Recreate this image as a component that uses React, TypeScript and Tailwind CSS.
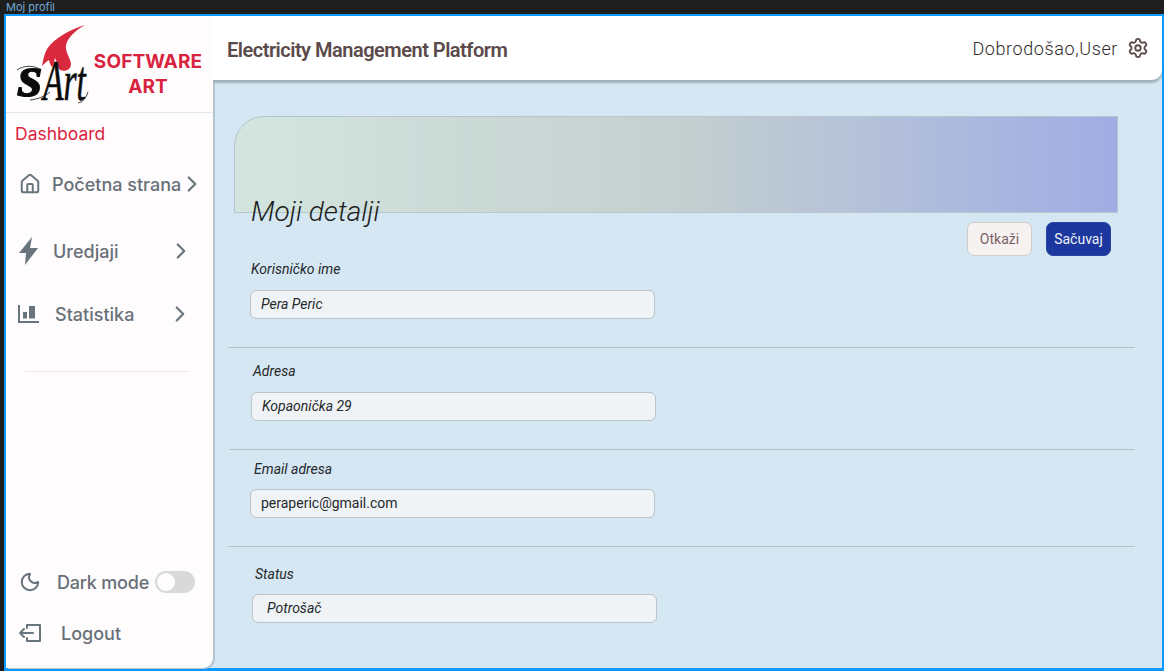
import React from "react";
import { ChevronRight, House, Moon, Settings } from "lucide-react";

const barlow = { fontFamily: "Roboto, 'Noto Sans', sans-serif" };

function Logo() {
  return (
    <div className="relative h-[97px] border-b border-[#e4e6ea] flex items-start">
      <svg width="74" height="94" viewBox="0 -6 74 94" className="ml-[10px] mt-[2px] shrink-0">
        <path d="M69 1 C55 5 38 14 31 25 C28 31 27 36 26 42 C29 39 31 37 33 36 C34 40 35 42 36 43 C38 41 38 38 39 34 C41 37 41 43 44 46 C49 48 55 46 55 40 C54 33 49 28 50 21 C52 13 60 6 69 1 Z" fill="#d8293f" />
        <text transform="translate(2 72) scale(1.05 1)" fill="#0b0b0b" stroke="#0b0b0b" strokeWidth="1.2" style={{ fontFamily: "'Liberation Serif', serif", fontStyle: "italic", fontWeight: 700, fontSize: 60 }}>s</text>
        <text transform="translate(27 76) scale(0.6 1)" fill="#0b0b0b" stroke="#0b0b0b" strokeWidth="0.6" style={{ fontFamily: "'Liberation Serif', serif", fontStyle: "italic", fontSize: 56 }}>Art</text>
        <path d="M1 46 C8 41 18 41 25 46 M14 76 C22 75 28 73 34 68 M62 79 C67 78 70 74 72 68" stroke="#111" strokeWidth="0.8" fill="none" />
      </svg>
      <div className="-ml-[1px] mt-[33px] w-[118px] text-center text-[#d8233f] text-[19px] leading-[25px] font-bold tracking-[0.1px]" style={{ fontFamily: "Inter, sans-serif" }}>
        <div>SOFTWARE</div>
        <div>ART</div>
      </div>
    </div>
  );
}

function Bolt() {
  return (
    <svg width="20" height="28" viewBox="0 0 20 28" className="text-[#69757d]">
      <path d="M13 0 L0 16 H7 L6 28 L19 11 H11 Z" fill="currentColor" />
    </svg>
  );
}

function Bars() {
  return (
    <svg width="21" height="18" viewBox="0 0 21 18" className="text-[#69757d]">
      <path d="M1 0 V17 H21" stroke="currentColor" strokeWidth="2" fill="none" />
      <rect x="5" y="7" width="4" height="6.5" fill="currentColor" />
      <rect x="11" y="1" width="6" height="12.5" fill="currentColor" />
    </svg>
  );
}

function LogoutIcon() {
  return (
    <svg width="24" height="20" viewBox="0 0 24 20" fill="none" stroke="#69757d" strokeWidth="2" strokeLinecap="round" strokeLinejoin="round">
      <path d="M9 5 V2 H22 V18 H9 V15" />
      <path d="M2 10 H15 M6 6 L2 10 L6 14" />
    </svg>
  );
}

function Sidebar() {
  const text = "text-[18px] font-medium text-[#687078]";
  return (
    <aside className="w-[207px] shrink-0 h-full bg-[#fffcfd] rounded-br-[10px] shadow-[2px_1px_0_#b3c4cd] flex flex-col" style={{ fontFamily: "Inter, sans-serif" }}>
      <Logo />
      <div className="pl-[9px] mt-[10px] text-[17.5px] leading-[22px] text-[#dc2340]">Dashboard</div>
      <div className="mt-[27px] h-[24px] flex items-center">
        <House size={22} strokeWidth={2.2} className="ml-[13px] text-[#69757d]" />
        <span className={`ml-[11px] ${text}`}>Početna strana</span>
        <ChevronRight size={26} strokeWidth={2} className="text-[#69757d] -ml-[2px]" />
      </div>
      <div className="mt-[41px] h-[28px] flex items-center">
        <div className="ml-[13px] w-[20px]"><Bolt /></div>
        <span className={`ml-[14px] ${text}`}>Uredjaji</span>
        <ChevronRight size={26} strokeWidth={2} className="text-[#69757d] ml-[50px]" />
      </div>
      <div className="mt-[37px] h-[24px] flex items-center">
        <div className="ml-[12px] w-[21px]"><Bars /></div>
        <span className={`ml-[16px] ${text}`}>Statistika</span>
        <ChevronRight size={26} strokeWidth={2} className="text-[#69757d] ml-[33px]" />
      </div>
      <div className="mt-[45px] ml-[19px] w-[164px] border-t border-[#eceaec]" />
      <div className="mt-auto h-[24px] flex items-center">
        <Moon size={22} strokeWidth={2.2} className="ml-[13px] text-[#69757d]" />
        <span className={`ml-[16px] tracking-[-0.2px] ${text}`}>Dark mode</span>
        <div className="ml-[6px] w-[40px] h-[22px] rounded-full bg-[#d9d9d9] p-[2px]">
          <div className="w-[18px] h-[18px] rounded-full bg-[#fffcfd]" />
        </div>
      </div>
      <div className="mt-[27px] mb-[23px] h-[24px] flex items-center">
        <div className="ml-[12px]"><LogoutIcon /></div>
        <span className={`ml-[19px] ${text}`}>Logout</span>
      </div>
    </aside>
  );
}

function Header() {
  return (
    <header className="h-[64px] shrink-0 bg-white rounded-br-[10px] shadow-[0_3px_2px_#9fb2ba] flex items-center" style={barlow}>
      <div className="ml-[14px] mt-[3px] text-[20px] font-semibold text-[#5b4a4a] tracking-[-0.5px]">Electricity Management Platform</div>
      <div className="ml-auto mr-[13px] flex items-center gap-[9px]">
        <span className="text-[18px] font-light text-[#2f2b2b] tracking-[0.6px]">Dobrodošao,User</span>
        <Settings size={22} strokeWidth={2} className="text-[#5b4a4a]" />
      </div>
    </header>
  );
}

function Divider({ className }: { className: string }) {
  return <div className={`h-px bg-[#b4c2cb] ${className}`} />;
}

function Main() {
  const label = "text-[14px] leading-[18px] italic text-[#26282b]";
  const input = "w-[405px] h-[29px] bg-[#eff3f6] border border-[#bcc2c6] rounded-[6px] flex items-center text-[14px] text-[#26282b]";
  return (
    <main className="flex-1 min-w-0 flex flex-col overflow-hidden" style={barlow}>
      <Header />
      <div className="flex flex-col">
        <div className="mt-[36px] ml-[21px] w-[884px] h-[97px] rounded-tl-[30px] border border-[#b5c6cc] bg-gradient-to-r from-[#d4e5df] via-[#c4d0cf] to-[#a1ace4]" />
        <div className="flex items-start h-[44px]">
          <h1 className="ml-[38px] -mt-[19px] text-[28px] leading-[36px] font-light italic text-[#1c1e20]">Moji detalji</h1>
          <div className="ml-auto mr-[51px] mt-[9px] flex gap-[14px]">
            <button className="w-[65px] h-[34px] rounded-[7px] bg-[#f6f2f1] border border-[#cfcccb] text-[14px] text-[#7c5f66]">Otkaži</button>
            <button className="w-[65px] h-[34px] rounded-[7px] bg-[#1c389f] border border-[#2a469f] text-[14px] text-[#eef1f8]">Sačuvaj</button>
          </div>
        </div>
        <div className={`ml-[38px] mt-[3px] ${label}`}>Korisničko ime</div>
        <div className={`ml-[37px] mt-[12px] pl-[10px] italic ${input}`}>Pera Peric</div>
        <Divider className="ml-[15px] w-[907px] mt-[28px]" />
        <div className={`ml-[40px] mt-[14px] ${label}`}>Adresa</div>
        <div className={`ml-[38px] mt-[12px] pl-[10px] italic ${input}`}>Kopaonička 29</div>
        <Divider className="ml-[16px] w-[906px] mt-[28px]" />
        <div className={`ml-[41px] mt-[10px] ${label}`}>Email adresa</div>
        <div className={`ml-[37px] mt-[11px] pl-[10px] ${input}`}>peraperic@gmail.com</div>
        <Divider className="ml-[15px] w-[907px] mt-[28px]" />
        <div className={`ml-[42px] mt-[18px] ${label}`}>Status</div>
        <div className={`ml-[39px] mt-[11px] pl-[14px] italic ${input}`}>Potrošač</div>
      </div>
    </main>
  );
}

export default function App() {
  return (
    <div className="w-[1164px] h-[671px] bg-[#1e1e1e] flex flex-col overflow-hidden">
      <div className="h-[14px] shrink-0 pl-[6px] text-[11px] leading-[14px] text-[#6fa9d4]" style={{ fontFamily: "Inter, sans-serif" }}>Moj profil</div>
      <div className="flex-1 min-h-0 ml-[4px] border-2 border-b-[3px] border-[#0d99ff] bg-[#d4e7f3] flex">
        <Sidebar />
        <Main />
      </div>
    </div>
  );
}
